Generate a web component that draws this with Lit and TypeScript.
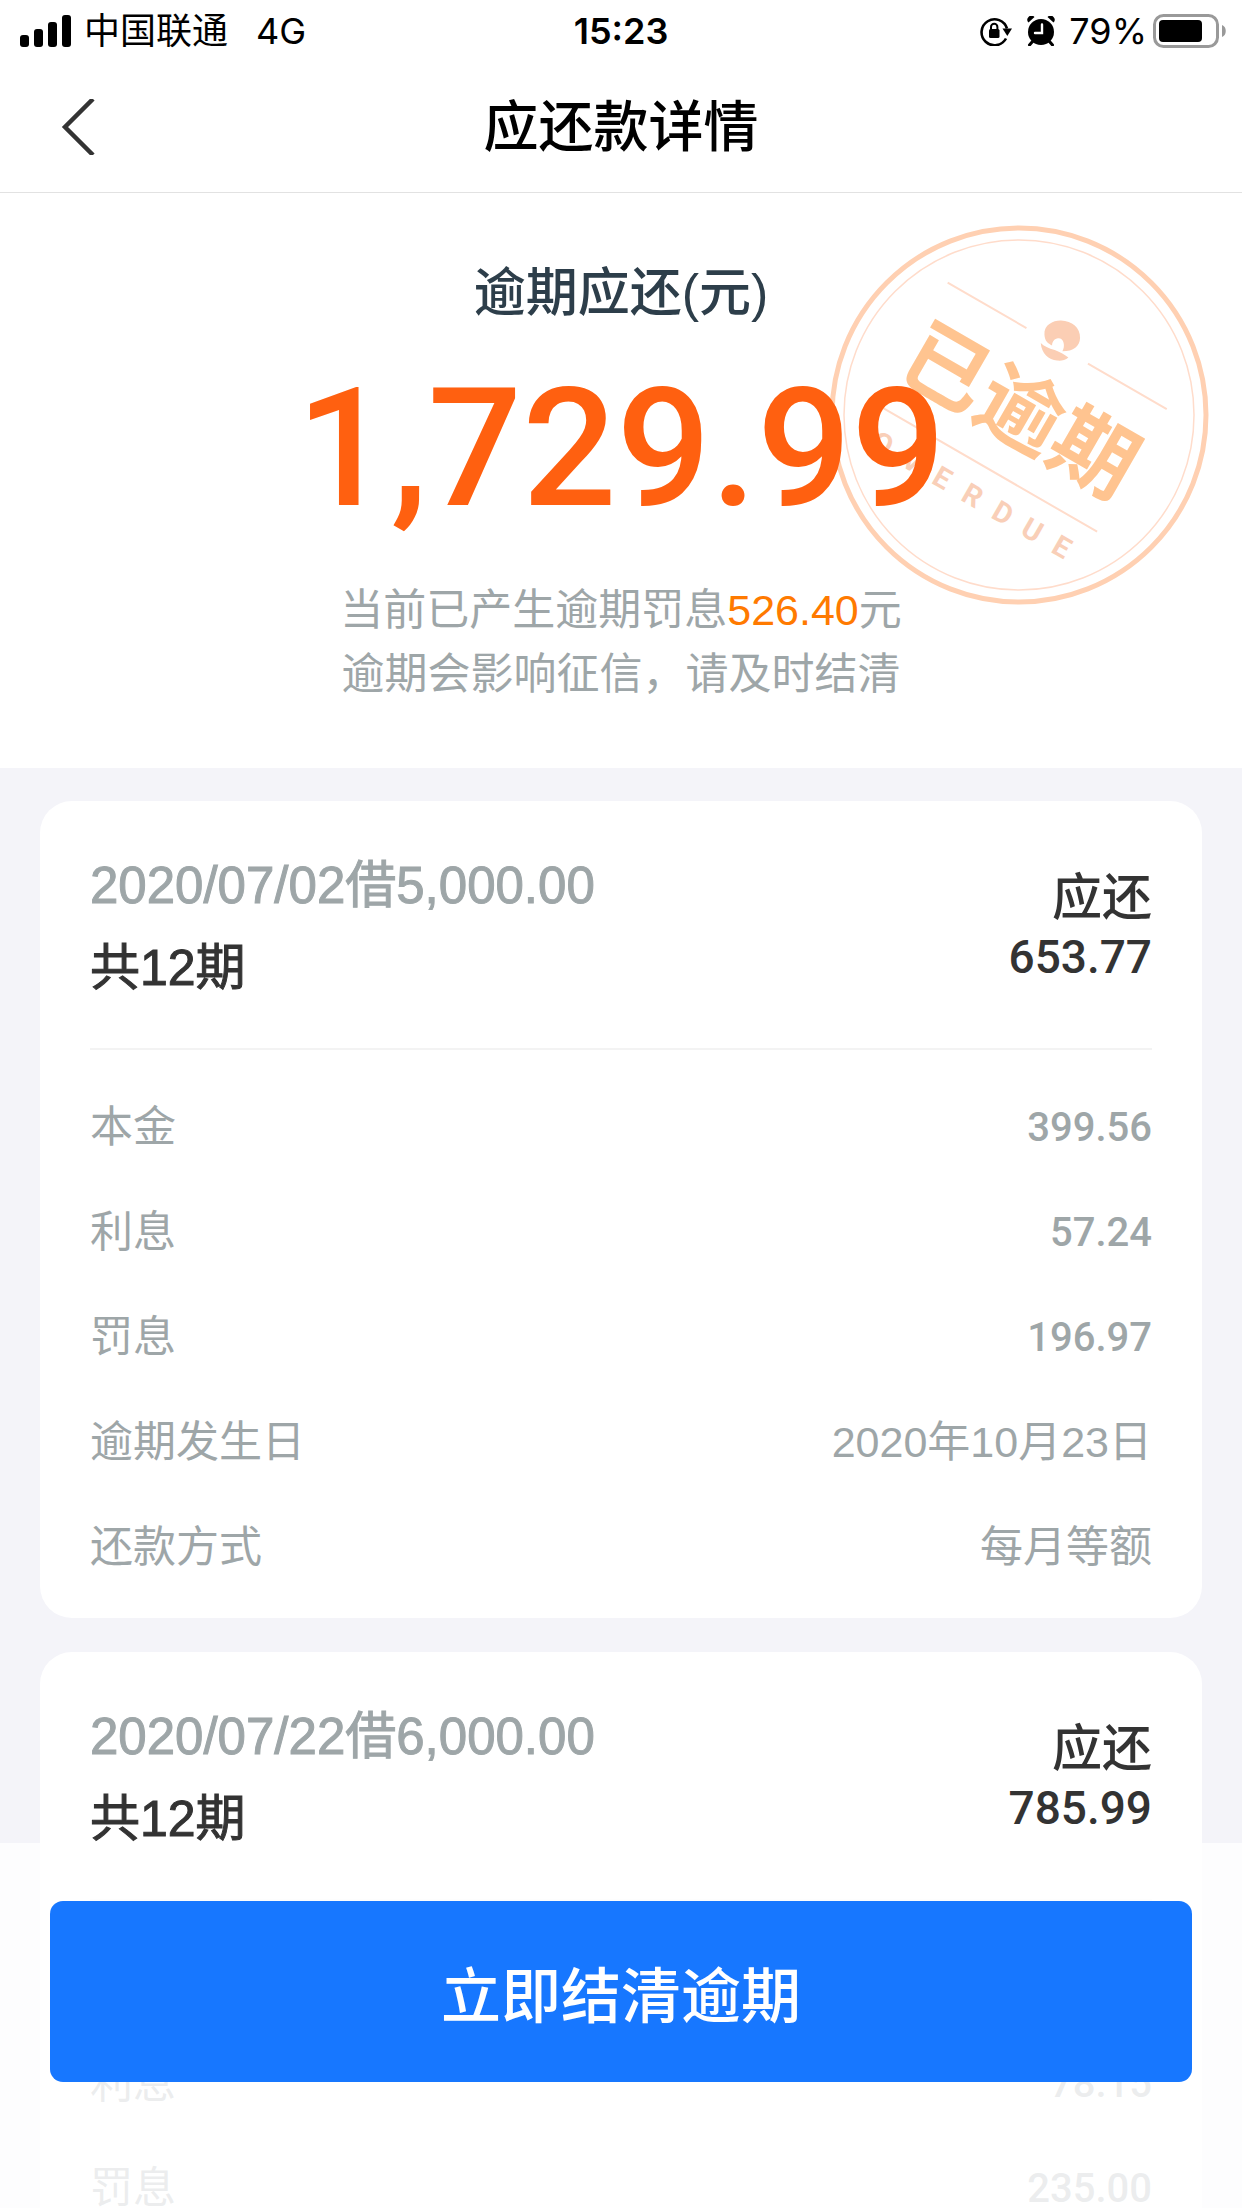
import { LitElement, html, css } from "lit";
import { customElement, property } from "lit/decorators.js";

interface Entry {
  label: string;
  value: string;
  numeric?: boolean;
}

interface Loan {
  title: string;
  terms: string;
  due: string;
  entries: Entry[];
}

const LOANS: Loan[] = [
  {
    title: "2020/07/02借5,000.00",
    terms: "共12期",
    due: "653.77",
    entries: [
      { label: "本金", value: "399.56", numeric: true },
      { label: "利息", value: "57.24", numeric: true },
      { label: "罚息", value: "196.97", numeric: true },
      { label: "逾期发生日", value: "2020年10月23日" },
      { label: "还款方式", value: "每月等额" },
    ],
  },
  {
    title: "2020/07/22借6,000.00",
    terms: "共12期",
    due: "785.99",
    entries: [
      { label: "本金", value: "472.84", numeric: true },
      { label: "利息", value: "78.15", numeric: true },
      { label: "罚息", value: "235.00", numeric: true },
    ],
  },
];

@customElement("status-bar")
export class StatusBar extends LitElement {
  static styles = css`
    :host {
      display: grid;
      grid-template-columns: 1fr auto 1fr;
      align-items: center;
      height: 62px;
      padding: 0 16px;
      box-sizing: border-box;
      font: 400 36px/62px Inter, "Noto Sans CJK SC", sans-serif;
      color: #000;
    }
    .side {
      display: flex;
      align-items: center;
    }
    .end {
      justify-content: flex-end;
    }
    .signal {
      margin-left: 4px;
    }
    .carrier {
      margin: 0 28px 0 12px;
    }
    .clock {
      font-weight: 600;
    }
    .lock {
      margin-right: 15px;
    }
    .alarm {
      margin-right: 14px;
    }
    .battery {
      margin-left: 6px;
    }
    svg {
      display: block;
      flex: none;
    }
  `;

  render() {
    return html`
      <div class="side">
        <svg class="signal" width="52" height="32" viewBox="0 0 52 32" aria-hidden="true">
          <rect x="0" y="20" width="9" height="12" rx="3" />
          <rect x="14" y="14" width="9" height="18" rx="3" />
          <rect x="28" y="7" width="9" height="25" rx="3" />
          <rect x="42" y="0" width="9" height="32" rx="3" />
        </svg>
        <span class="carrier">中国联通</span>
        <span>4G</span>
      </div>
      <span class="clock">15:23</span>
      <div class="side end">
        <svg class="lock" width="32" height="30" viewBox="0 0 32 30" aria-hidden="true">
          <path d="M26 22.5A13 13 0 1 1 27 12.500" fill="none" stroke="#000" stroke-width="2.600" />
          <path d="M22.500 12.500h9.500l-4.700 7.500z" />
          <rect x="9" y="13" width="10.500" height="9" rx="1.500" />
          <path d="M11 13.500v-2.500a3.200 3.200 0 0 1 6.400 0v2.500" fill="none" stroke="#000" stroke-width="2" />
        </svg>
        <svg class="alarm" width="28" height="30" viewBox="0 0 28 30" aria-hidden="true">
          <circle cx="14" cy="16" r="13" />
          <path d="M1.500 6.500a4 4 0 0 1 6-5.500zM26.500 6.500a4 4 0 0 0-6-5.500z" />
          <path d="M5.500 25.500l-3 3.500M22.500 25.500l3 3.500" stroke="#000" stroke-width="3" stroke-linecap="round" />
          <path d="M15 8.500v8.500h-7" fill="none" stroke="#fff" stroke-width="2.400" stroke-linecap="round" />
        </svg>
        <span>79%</span>
        <svg class="battery" width="73" height="34" viewBox="0 0 73 34" aria-hidden="true">
          <rect x="1.500" y="1.500" width="63" height="31" rx="9" fill="none" stroke="#999" stroke-width="3" />
          <rect x="6" y="6" width="43" height="22" rx="4" />
          <path d="M69 11c5 1.500 5 10.500 0 12z" fill="#999" />
        </svg>
      </div>
    `;
  }
}

@customElement("overdue-stamp")
export class OverdueStamp extends LitElement {
  static styles = css`
    :host {
      display: block;
    }
    svg {
      display: block;
      width: 100%;
      height: 100%;
    }
    .seal {
      font: 700 85px "Noto Sans CJK SC", sans-serif;
      fill: #ffc490;
      text-anchor: middle;
    }
    .caption {
      font: 700 29px Roboto, sans-serif;
      fill: #f9cfb8;
      text-anchor: middle;
    }
  `;

  render() {
    return html`
      <svg viewBox="-190 -190 380 380" role="img" aria-label="已逾期">
        <circle r="187" fill="none" stroke="#ffd0b2" stroke-width="5" />
        <circle r="175" fill="none" stroke="#ffdccb" stroke-width="1.500" />
        <g transform="rotate(30)">
          <path d="M-128-79h91M34-79h91M-128 62h254" stroke="#ffdccb" stroke-width="2" />
          <text class="seal" x="-1" y="26">已逾期</text>
          <text class="caption" x="-104 -69 -35 0 35 69 103" y="103">OVERDUE</text>
        </g>
        <g transform="translate(-220 -215.300) scale(0.333)" fill="#fbceb4">
          <path d="M737 405C735 375 765 362 787 363C820 364 845 385 844 415C843 440 825 455 791 455C800 440 796 415 778 416C768 417 760 425 760 438C748 432 738 425 737 405Z" />
          <path d="M726 430C735 440 750 446 768 451C785 458 798 465 809 474C800 483 785 484 775 483C750 480 728 462 726 430Z" />
        </g>
      </svg>
    `;
  }
}

@customElement("loan-card")
export class LoanCard extends LitElement {
  @property({ attribute: false }) loan!: Loan;

  static styles = css`
    :host {
      display: block;
      padding: 0 50px 18px;
      border-radius: 32px;
      background: #fff;
    }
    .head {
      display: flex;
      justify-content: space-between;
      padding: 44px 0 39px;
      border-bottom: 2px solid #f3f3f3;
      font-size: 50px;
      color: #333;
    }
    .title,
    .terms {
      margin: 0;
      font-size: 50px;
      font-weight: 400;
      line-height: 82px;
      -webkit-text-stroke: 1px currentColor;
    }
    .title {
      font-size: 51px;
      color: #9ea6a8;
    }
    .due {
      display: flex;
      flex-direction: column;
      padding-top: 24px;
      text-align: right;
      font-weight: 500;
      line-height: 59px;
    }
    .amount {
      font-family: Roboto, sans-serif;
      font-weight: 500;
      font-size: 46px;
    }
    .entries {
      margin: 0;
      padding-top: 25px;
    }
    .entry {
      display: flex;
      justify-content: space-between;
      font-size: 43px;
      line-height: 105px;
      color: #9ea6a8;
    }
    .value {
      margin: 0;
    }
    .numeric {
      font-family: Roboto, sans-serif;
      font-weight: 500;
      font-size: 40px;
    }
  `;

  render() {
    const { title, terms, due, entries } = this.loan;
    return html`
      <div class="head">
        <div>
          <h2 class="title">${title}</h2>
          <p class="terms">${terms}</p>
        </div>
        <div class="due">
          <span>应还</span>
          <span class="amount">${due}</span>
        </div>
      </div>
      <dl class="entries">
        ${entries.map(
          (entry) => html`
            <div class="entry">
              <dt>${entry.label}</dt>
              <dd class="value ${entry.numeric ? "numeric" : ""}">${entry.value}</dd>
            </div>
          `,
        )}
      </dl>
    `;
  }
}

@customElement("app-root")
export class AppRoot extends LitElement {
  static styles = css`
    :host {
      display: flex;
      flex-direction: column;
      position: relative;
      height: 100vh;
      overflow: hidden;
      background: #f4f4f9;
      font-family: "Liberation Sans", "Noto Sans CJK SC", sans-serif;
    }
    .top {
      flex: none;
      background: #fff;
      border-bottom: 1px solid #e2e2e2;
    }
    .nav {
      display: grid;
      grid-template-columns: 120px 1fr 120px;
      align-items: center;
      height: 130px;
    }
    .back {
      display: flex;
      align-items: center;
      height: 100%;
      padding: 0 0 0 60px;
      border: 0;
      background: none;
    }
    .heading {
      margin: 0;
      text-align: center;
      font-weight: 500;
      font-size: 55px;
      line-height: 80px;
      color: #000;
    }
    .content {
      flex: 1;
      min-height: 0;
      overflow-y: auto;
      scrollbar-width: none;
    }
    .overview {
      position: relative;
      padding: 64px 0 62px;
      background: #fff;
      text-align: center;
    }
    .stamp {
      position: absolute;
      top: 32px;
      right: 33px;
      width: 380px;
      height: 380px;
    }
    .summary {
      position: relative;
    }
    .caption {
      margin: 0;
      font-weight: 500;
      font-size: 52px;
      line-height: 72px;
      color: #2d3e4a;
    }
    .total {
      margin: 30px 0 39px;
      font: 500 166px/180px Roboto, sans-serif;
      color: #ff6010;
    }
    .note {
      margin: 0;
      font-size: 43px;
      line-height: 64px;
      color: #9ea6a8;
    }
    .penalty {
      color: #ff7a00;
    }
    .loans {
      display: flex;
      flex-direction: column;
      gap: 34px;
      padding: 33px 40px 0;
    }
    .footer {
      position: absolute;
      right: 0;
      bottom: 0;
      left: 0;
      padding: 58px 50px 126px;
      background: rgba(255, 255, 255, 0.8);
    }
    .settle {
      display: block;
      width: 100%;
      height: 181px;
      border: 0;
      border-radius: 13px;
      background: #1777ff;
      color: #fff;
      font: 500 60px/84px "Noto Sans CJK SC", sans-serif;
    }
  `;

  render() {
    return html`
      <header class="top">
        <status-bar></status-bar>
        <nav class="nav">
          <button class="back" aria-label="返回">
            <svg width="36" height="56" viewBox="0 0 36 56" aria-hidden="true">
              <path d="M33 0L5 28L33 56" fill="none" stroke="#333" stroke-width="4.500" />
            </svg>
          </button>
          <h1 class="heading">应还款详情</h1>
        </nav>
      </header>
      <main class="content">
        <section class="overview">
          <overdue-stamp class="stamp"></overdue-stamp>
          <div class="summary">
            <p class="caption">逾期应还(元)</p>
            <p class="total">1,729.99</p>
            <p class="note">当前已产生逾期罚息<span class="penalty">526.40</span>元</p>
            <p class="note">逾期会影响征信，请及时结清</p>
          </div>
        </section>
        <section class="loans">
          ${LOANS.map((loan) => html`<loan-card .loan=${loan}></loan-card>`)}
        </section>
      </main>
      <footer class="footer">
        <button class="settle">立即结清逾期</button>
      </footer>
    `;
  }
}
